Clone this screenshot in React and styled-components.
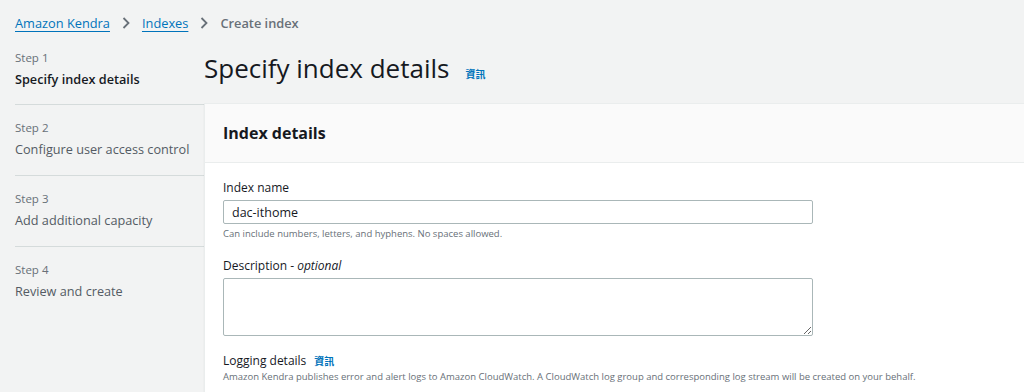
import React from 'react';
import styled, { createGlobalStyle } from 'styled-components';

const GlobalStyle = createGlobalStyle`
  html, body {
    margin: 0;
    padding: 0;
    background: #f2f3f3;
    font-family: "Open Sans", "Noto Sans CJK TC", sans-serif;
    color: #16191f;
    overflow: hidden;
  }
`;

const Page = styled.div`
  width: 1024px;
  height: 392px;
  overflow: hidden;
  background: #f2f3f3;
`;

const Breadcrumbs = styled.nav`
  display: flex;
  align-items: center;
  gap: 9px;
  height: 45px;
  padding-left: 15px;
  font-size: 12.8px;
`;

const Crumb = styled.a`
  color: #0073bb;
  text-decoration: underline;
  text-underline-offset: 3px;
`;

const Current = styled.span`
  color: #687078;
  font-weight: 600;
`;

const Chevron = () => (
  <svg width="14" height="14" viewBox="0 0 14 14">
    <path d="M4.5 2 L9.5 7 L4.5 12" fill="none" stroke="#687078" strokeWidth="1.8" />
  </svg>
);

const Layout = styled.div`
  display: grid;
  grid-template-columns: 204px 1fr;
`;

const Steps = styled.ol`
  list-style: none;
  margin: 0;
  padding: 0 0 0 15px;
`;

const StepItem = styled.li`
  box-sizing: border-box;
  padding-top: ${p => (p.first ? '4px' : '14px')};
  border-top: ${p => (p.first ? 'none' : '1px solid #d5dbdb')};
  height: ${p => (p.first ? '59px' : '71px')};
`;

const StepLabel = styled.div`
  font-size: 11.5px;
  color: #687078;
  line-height: 18px;
`;

const StepTitle = styled.div`
  font-size: 12.7px;
  line-height: 24px;
  color: ${p => (p.active ? '#16191f' : '#545b64')};
  font-weight: ${p => (p.active ? 600 : 400)};
`;

const Main = styled.div`
  display: flex;
  flex-direction: column;
`;

const TitleRow = styled.div`
  display: flex;
  align-items: baseline;
  gap: 16px;
  height: 58px;
  box-sizing: border-box;
  padding-top: 3px;
`;

const PageTitle = styled.h1`
  margin: 0;
  font-size: 26px;
  font-weight: 400;
  line-height: 40px;
  color: #16191f;
`;

const Info = styled.a`
  color: #0073bb;
  font-size: 10px;
  font-weight: 700;
  font-family: "Noto Sans CJK TC", sans-serif;
`;

const Panel = styled.section`
  background: #fff;
  border-top: 1px solid #eaeded;
  border-left: 1px solid #eaeded;
  box-shadow: 0 1px 1px rgba(0, 28, 36, 0.1);
  flex: 1;
`;

const PanelHeader = styled.div`
  background: #fafafa;
  border-bottom: 1px solid #eaeded;
  height: 59px;
  box-sizing: border-box;
  padding: 16px 18px;
`;

const PanelTitle = styled.h2`
  margin: 0;
  font-size: 16px;
  font-weight: 700;
  line-height: 26px;
`;

const PanelBody = styled.div`
  padding: 16px 18px;
  display: flex;
  flex-direction: column;
  gap: 16px;
`;

const Field = styled.div`
  display: flex;
  flex-direction: column;
`;

const Label = styled.label`
  font-size: 12px;
  font-weight: 500;
  line-height: 18px;
  margin-bottom: ${p => (p.tight ? '0' : '3px')};
  display: flex;
  align-items: baseline;
  gap: 8px;
  color: #16191f;

  em {
    font-weight: 400;
  }
`;

const Input = styled.input`
  width: 590px;
  height: 24px;
  box-sizing: border-box;
  border: 1px solid #aab7b8;
  border-radius: 2px;
  padding: 0 8px;
  font-family: inherit;
  font-size: 12.5px;
  color: #16191f;
  outline: none;
`;

const TextArea = styled.textarea`
  width: 590px;
  height: 58px;
  box-sizing: border-box;
  border: 1px solid #aab7b8;
  border-radius: 2px;
  font-family: inherit;
  resize: vertical;
  outline: none;
`;

const Hint = styled.div`
  font-size: 9.5px;
  color: #687078;
  line-height: 14px;
  margin-top: ${p => (p.tight ? '0' : '3px')};
`;

const steps = [
  { n: 1, title: 'Specify index details', active: true },
  { n: 2, title: 'Configure user access control' },
  { n: 3, title: 'Add additional capacity' },
  { n: 4, title: 'Review and create' },
];

export default function App() {
  return (
    <Page>
      <GlobalStyle />
      <Breadcrumbs>
        <Crumb>Amazon Kendra</Crumb>
        <Chevron />
        <Crumb>Indexes</Crumb>
        <Chevron />
        <Current>Create index</Current>
      </Breadcrumbs>
      <Layout>
        <Steps>
          {steps.map((s, i) => (
            <StepItem key={s.n} first={i === 0}>
              <StepLabel>Step {s.n}</StepLabel>
              <StepTitle active={s.active}>{s.title}</StepTitle>
            </StepItem>
          ))}
        </Steps>
        <Main>
          <TitleRow>
            <PageTitle>Specify index details</PageTitle>
            <Info>資訊</Info>
          </TitleRow>
          <Panel>
            <PanelHeader>
              <PanelTitle>Index details</PanelTitle>
            </PanelHeader>
            <PanelBody>
              <Field>
                <Label>Index name</Label>
                <Input defaultValue="dac-ithome" />
                <Hint>Can include numbers, letters, and hyphens. No spaces allowed.</Hint>
              </Field>
              <Field>
                <Label>
                  <span>Description - <em>optional</em></span>
                </Label>
                <TextArea />
              </Field>
              <Field>
                <Label tight>
                  Logging details <Info>資訊</Info>
                </Label>
                <Hint tight>
                  Amazon Kendra publishes error and alert logs to Amazon CloudWatch. A CloudWatch log group and corresponding log stream will be created on your behalf.
                </Hint>
              </Field>
            </PanelBody>
          </Panel>
        </Main>
      </Layout>
    </Page>
  );
}
